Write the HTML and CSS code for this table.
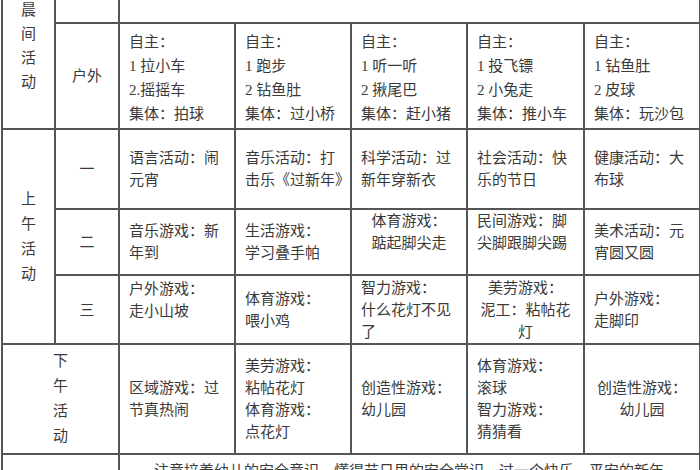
FILE: index.html
```html
<!DOCTYPE html>
<html lang="zh-CN">
<head>
<meta charset="utf-8">
<title>活动安排表</title>
<link rel="stylesheet" href="styles.css">
</head>
<body>
<div class="frame">
<table class="schedule">
  <colgroup>
    <col class="c1"><col class="c2"><col class="c3"><col class="c4"><col class="c5"><col class="c6"><col class="c7">
  </colgroup>
  <tr class="r-top">
    <td rowspan="2" class="label morning"><div class="vert">晨间活动</div></td>
    <td class="center top-text">室内</td>
    <td colspan="5"></td>
  </tr>
  <tr class="r-out">
    <td class="center">户外</td>
    <td>自主：<br>1 拉小车<br>2.摇摇车<br>集体：拍球</td>
    <td>自主：<br>1 跑步<br>2 钻鱼肚<br>集体：过小桥</td>
    <td>自主：<br>1 听一听<br>2 揪尾巴<br>集体：赶小猪</td>
    <td>自主：<br>1 投飞镖<br>2 小兔走<br>集体：推小车</td>
    <td>自主：<br>1 钻鱼肚<br>2 皮球<br>集体：玩沙包</td>
  </tr>
  <tr class="r-1">
    <td rowspan="3" class="label"><div class="vert wide">上午活动</div></td>
    <td class="center">一</td>
    <td>语言活动：闹<br>元宵</td>
    <td>音乐活动：打<br>击乐《过新年》</td>
    <td>科学活动：过<br>新年穿新衣</td>
    <td>社会活动：快<br>乐的节日</td>
    <td>健康活动：大<br>布球</td>
  </tr>
  <tr class="r-2">
    <td class="center">二</td>
    <td>音乐游戏：新<br>年到</td>
    <td>生活游戏：<br>学习叠手帕</td>
    <td class="center up">体育游戏：<br>踮起脚尖走</td>
    <td class="up">民间游戏：脚<br>尖脚跟脚尖踢</td>
    <td>美术活动：元<br>宵圆又圆</td>
  </tr>
  <tr class="r-3">
    <td class="center">三</td>
    <td class="up">户外游戏：<br>走小山坡</td>
    <td>体育游戏：<br>喂小鸡</td>
    <td>智力游戏：<br>什么花灯不见<br>了</td>
    <td class="center">美劳游戏：<br>泥工：粘帖花<br>灯</td>
    <td>户外游戏：<br>走脚印</td>
  </tr>
  <tr class="r-pm">
    <td colspan="2" class="label"><div class="vert wide">下午活动</div></td>
    <td>区域游戏：过<br>节真热闹</td>
    <td>美劳游戏：<br>粘帖花灯<br>体育游戏：<br>点花灯</td>
    <td>创造性游戏：<br>幼儿园</td>
    <td>体育游戏：<br>滚球<br>智力游戏：<br>猜猜看</td>
    <td class="center">创造性游戏：<br>幼儿园</td>
  </tr>
  <tr class="r-note">
    <td colspan="2"></td>
    <td colspan="5" class="note"><p>注意培养幼儿的安全意识，懂得节日里的安全常识，过一个快乐、平安的新年。</p></td>
  </tr>
</table>
</div>
</body>
</html>
```

FILE: styles.css
```css
html, body {
  margin: 0;
  padding: 0;
  background: #ffffff;
}

body {
  width: 700px;
  height: 470px;
  overflow: hidden;
  font-family: "Liberation Serif", "Noto Sans CJK SC", serif;
  font-size: 15px;
  color: #3a3a3a;
}

.frame {
  width: 700px;
  height: 470px;
  overflow: hidden;
}

.schedule {
  border-collapse: collapse;
  table-layout: fixed;
  width: 698px;
  margin: -30px 0 0 1px;
}

.c1 { width: 53px; }
.c2 { width: 64px; }
.c3 { width: 116px; }
.c4 { width: 116px; }
.c5 { width: 116px; }
.c6 { width: 117px; }
.c7 { width: 116px; }

.schedule td {
  border: 2px solid #555555;
  padding: 0 4px 0 9px;
  vertical-align: middle;
  line-height: 22px;
  white-space: nowrap;
}

.schedule td.center {
  text-align: center;
  padding: 0;
}

.schedule td.up {
  padding-bottom: 20px;
}

.schedule td.center.up {
  padding-bottom: 20px;
}

.r-top { height: 52px; }
.r-out { height: 106px; }
.r-1 { height: 80px; }
.r-2 { height: 65px; }
.r-3 { height: 69px; }
.r-pm { height: 110px; }
.r-note { height: 80px; }

.r-out td {
  line-height: 24px;
  padding-top: 4px;
}

.top-text {
  padding-bottom: 18px !important;
}

.label {
  text-align: center;
  padding: 0 !important;
}

.schedule td.morning {
  padding-bottom: 8px !important;
}

.vert {
  width: 1em;
  margin: 0 auto;
  white-space: normal;
  line-height: 24px;
}

.vert.wide {
  line-height: 25px;
}

.note {
  vertical-align: top !important;
}

.note p {
  margin: 5px 0 0 0;
  padding-left: 25px;
  white-space: nowrap;
}
```
